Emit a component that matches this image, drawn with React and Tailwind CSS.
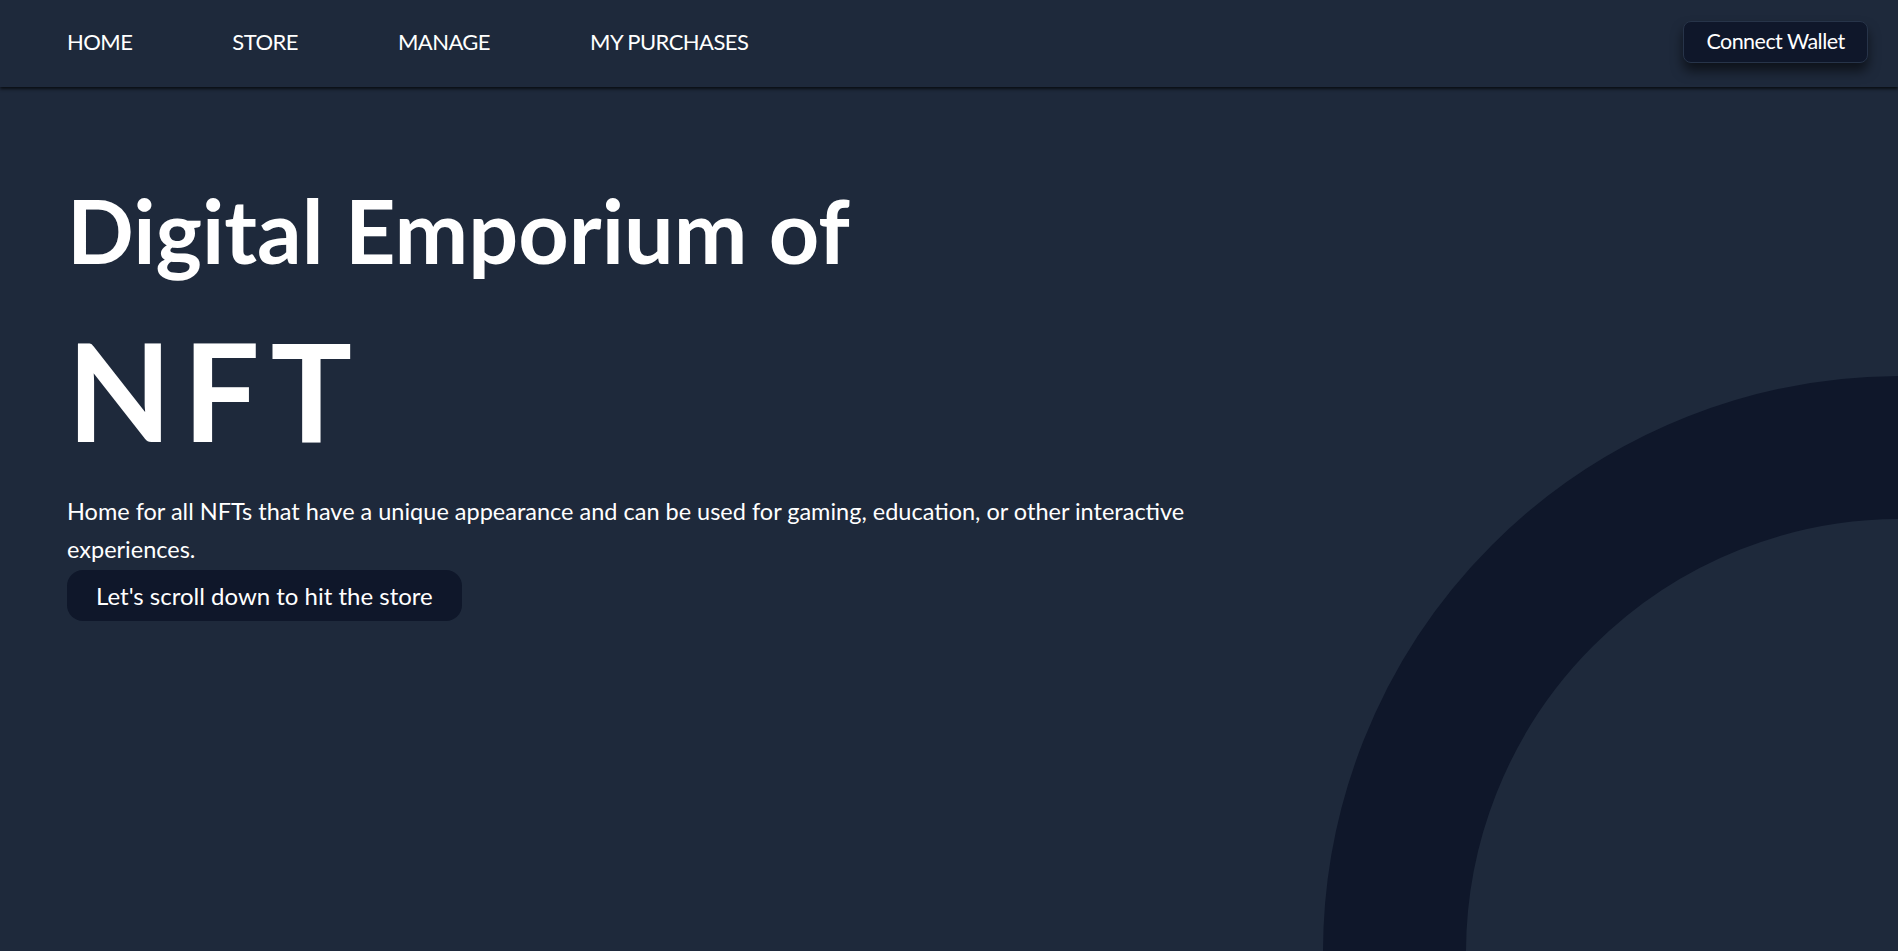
import React from 'react';

const links = ['HOME', 'STORE', 'MANAGE', 'MY PURCHASES'];

const App = () => {
    return (
        <div className="relative h-screen w-full overflow-hidden bg-[#1e293b] text-white font-['Lato',sans-serif]">
            {/* Decorative ring */}
            <div className="pointer-events-none absolute right-[-579px] bottom-[-579px] h-[1154px] w-[1154px] rounded-full border-[143px] border-[#0f172a]"></div>

            {/* Navbar */}
            <nav className="relative z-10 flex h-[87px] items-center justify-between pl-[67px] pr-[30px] shadow-[0_2px_3px_rgba(0,0,0,0.7)]">
                <ul className="flex items-center gap-[100px] pb-1">
                    {links.map((link) => (
                        <li key={link} className="text-[22px] leading-none tracking-tight">
                            {link}
                        </li>
                    ))}
                </ul>
                <button className="mb-1 h-[42px] w-[185px] rounded-lg border border-[#273449] bg-[#0f172a] text-[21.5px] tracking-tight shadow-[0_8px_12px_rgba(0,0,0,0.55)]">
                    Connect Wallet
                </button>
            </nav>

            {/* Hero */}
            <section className="relative px-[67px] pt-[99px]">
                <h1 className="text-[88px] font-bold leading-none">Digital Emporium of</h1>
                <h2 className="mt-[48px] text-[136px] font-bold leading-none tracking-[0.08em]">NFT</h2>
                <p className="mt-[35px] max-w-[1200px] text-[23.5px] leading-[37.5px]">
                    Home for all NFTs that have a unique appearance and can be used for gaming, education, or other interactive experiences.
                </p>
                <button className="mt-[2px] h-[51px] rounded-2xl bg-[#0f172a] px-[29px] text-[24px]">
                    Let's scroll down to hit the store
                </button>
            </section>
        </div>
    );
};

export default App;
